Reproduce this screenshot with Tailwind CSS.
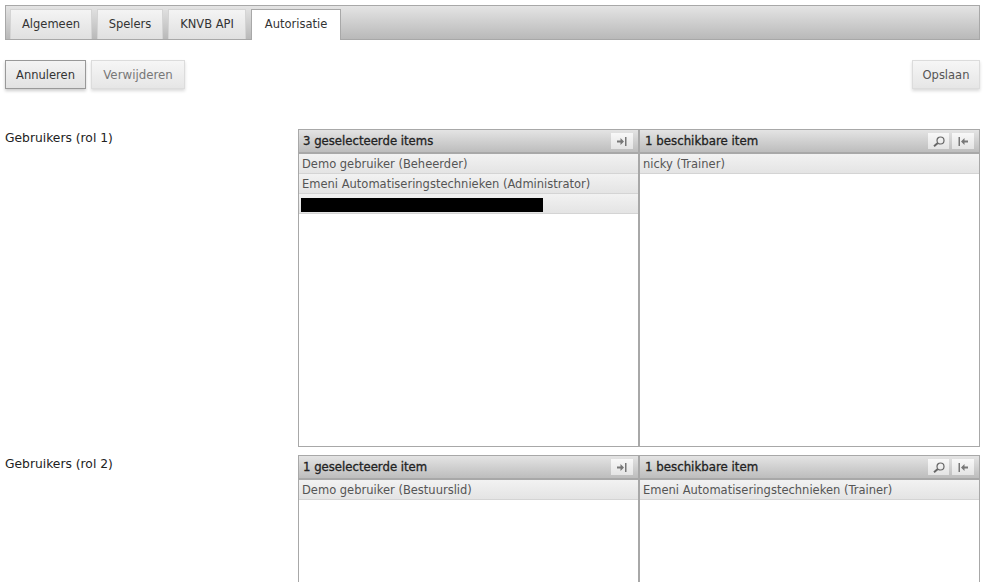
<!DOCTYPE html>
<html lang="nl">
<head>
  <meta charset="UTF-8" />
  <title>Autorisatie</title>
  <script src="https://cdn.jsdelivr.net/npm/@tailwindcss/browser@4"></script>
</head>
<body class="bg-white h-[582px] overflow-hidden pl-[5px] pr-[9px] pt-[5px] font-['DejaVu_Sans',sans-serif] text-[11.5px] text-[#333]">
  <!-- tabs -->
  <div class="h-[35px] border border-[#a8a8a8] bg-gradient-to-b from-[#e4e4e4] to-[#b9b9b9] flex items-end gap-[5px] pl-[4px]">
    <div class="w-[82px] h-[30px] border border-[#d4d4d4] border-b-0 bg-gradient-to-b from-[#f4f4f4] to-[#e0e0e0] flex items-center justify-center">Algemeen</div>
    <div class="w-[66px] h-[30px] border border-[#d4d4d4] border-b-0 bg-gradient-to-b from-[#f4f4f4] to-[#e0e0e0] flex items-center justify-center">Spelers</div>
    <div class="w-[78px] h-[30px] border border-[#d4d4d4] border-b-0 bg-gradient-to-b from-[#f4f4f4] to-[#e0e0e0] flex items-center justify-center">KNVB API</div>
    <div class="w-[90px] h-[31px] -mb-px border border-[#a8a8a8] border-b-0 bg-white flex items-center justify-center">Autorisatie</div>
  </div>

  <!-- buttons -->
  <div class="mt-[20px] flex gap-[5px]">
    <button class="w-[81px] h-[29px] pt-[2px] border border-[#999] bg-gradient-to-b from-[#f4f4f4] to-[#e2e2e2] shadow-[0_2px_3px_rgba(0,0,0,0.2)]">Annuleren</button>
    <button class="w-[94px] h-[29px] pt-[2px] border border-[#dcdcdc] bg-gradient-to-b from-[#f6f6f6] to-[#e6e6e6] shadow-[0_2px_3px_rgba(0,0,0,0.15)] text-[#777] text-[11.8px]">Verwijderen</button>
    <button class="ml-auto w-[68px] h-[29px] pt-[2px] border border-[#dcdcdc] bg-gradient-to-b from-[#f6f6f6] to-[#e6e6e6] shadow-[0_2px_3px_rgba(0,0,0,0.15)] text-[#555]">Opslaan</button>
  </div>

  <!-- rol 1 -->
  <div class="mt-[40px] flex">
    <div class="w-[293px] pt-px leading-[17px] text-[12.3px] text-[#222]">Gebruikers (rol 1)</div>
    <div class="flex w-[682px] h-[318px] border border-[#a8a8a8]">
      <div class="flex-1 border-r-2 border-[#a8a8a8] flex flex-col">
        <div class="h-[24px] border-b-2 border-[#a8a8a8] bg-gradient-to-b from-[#e4e4e4] to-[#bdbdbd] flex items-center pl-[4px] pr-[5px] text-[11.7px] text-[#222] [-webkit-text-stroke:0.3px_#222]">
          <span class="flex-1 pt-px">3 geselecteerde items</span>
          <span class="w-[22px] h-[16px] bg-gradient-to-b from-[#f8f8f8] to-[#e4e4e4] flex items-center justify-center">
            <svg width="10" height="9" viewBox="0 0 10 9" fill="#777" stroke="none"><path d="M0 3.5h3.5V1l3.5 3.5L3.5 8V5.5H0zM8 0h1.5v9H8z"/></svg>
          </span>
        </div>
        <div class="h-[20px] pt-[2px] border-b border-[#d4d4d4] bg-gradient-to-b from-[#f2f2f2] to-[#e4e4e4] flex items-center pl-[3px] text-[#555]">Demo gebruiker (Beheerder)</div>
        <div class="h-[20px] pt-[2px] border-b border-[#d4d4d4] bg-gradient-to-b from-[#f2f2f2] to-[#e4e4e4] flex items-center pl-[3px] text-[#555]">Emeni Automatiseringstechnieken (Administrator)</div>
        <div class="h-[20px] pt-[2px] border-b border-[#d4d4d4] bg-gradient-to-b from-[#f2f2f2] to-[#e4e4e4] flex items-center pl-[2px]"><div class="w-[242px] h-[14px] bg-black"></div></div>
      </div>
      <div class="flex-1 flex flex-col">
        <div class="h-[24px] border-b-2 border-[#a8a8a8] bg-gradient-to-b from-[#e4e4e4] to-[#bdbdbd] flex items-center gap-[3px] pl-[5px] pr-[5px] text-[11.8px] text-[#222] [-webkit-text-stroke:0.3px_#222]">
          <span class="flex-1 pt-px">1 beschikbare item</span>
          <span class="w-[21px] h-[16px] bg-gradient-to-b from-[#f8f8f8] to-[#e4e4e4] flex items-center justify-center">
            <svg width="12" height="11" viewBox="0 0 12 11" fill="none" stroke="#666"><circle cx="7.5" cy="4.5" r="3.5" stroke-width="1.2"/><path d="M4.8 7L1 10.2" stroke-width="2"/></svg>
          </span>
          <span class="w-[22px] h-[16px] bg-gradient-to-b from-[#f8f8f8] to-[#e4e4e4] flex items-center justify-center">
            <svg width="10" height="9" viewBox="0 0 10 9" fill="#777" stroke="none"><path d="M0.5 0H2v9H0.5zM10 3.5H6.5V1L3 4.5 6.5 8V5.5H10z"/></svg>
          </span>
        </div>
        <div class="h-[20px] pt-[2px] border-b border-[#d4d4d4] bg-gradient-to-b from-[#f2f2f2] to-[#e4e4e4] flex items-center pl-[3px] text-[#555]">nicky (Trainer)</div>
      </div>
    </div>
  </div>

  <!-- rol 2 -->
  <div class="mt-[8px] flex">
    <div class="w-[293px] pt-px leading-[17px] text-[12.3px] text-[#222]">Gebruikers (rol 2)</div>
    <div class="flex w-[682px] h-[318px] border border-[#a8a8a8]">
      <div class="flex-1 border-r-2 border-[#a8a8a8] flex flex-col">
        <div class="h-[24px] border-b-2 border-[#a8a8a8] bg-gradient-to-b from-[#e4e4e4] to-[#bdbdbd] flex items-center pl-[4px] pr-[5px] text-[11.7px] text-[#222] [-webkit-text-stroke:0.3px_#222]">
          <span class="flex-1 pt-px">1 geselecteerde item</span>
          <span class="w-[22px] h-[16px] bg-gradient-to-b from-[#f8f8f8] to-[#e4e4e4] flex items-center justify-center">
            <svg width="10" height="9" viewBox="0 0 10 9" fill="#777" stroke="none"><path d="M0 3.5h3.5V1l3.5 3.5L3.5 8V5.5H0zM8 0h1.5v9H8z"/></svg>
          </span>
        </div>
        <div class="h-[20px] pt-[2px] border-b border-[#d4d4d4] bg-gradient-to-b from-[#f2f2f2] to-[#e4e4e4] flex items-center pl-[3px] text-[#555]">Demo gebruiker (Bestuurslid)</div>
      </div>
      <div class="flex-1 flex flex-col">
        <div class="h-[24px] border-b-2 border-[#a8a8a8] bg-gradient-to-b from-[#e4e4e4] to-[#bdbdbd] flex items-center gap-[3px] pl-[5px] pr-[5px] text-[11.8px] text-[#222] [-webkit-text-stroke:0.3px_#222]">
          <span class="flex-1 pt-px">1 beschikbare item</span>
          <span class="w-[21px] h-[16px] bg-gradient-to-b from-[#f8f8f8] to-[#e4e4e4] flex items-center justify-center">
            <svg width="12" height="11" viewBox="0 0 12 11" fill="none" stroke="#666"><circle cx="7.5" cy="4.5" r="3.5" stroke-width="1.2"/><path d="M4.8 7L1 10.2" stroke-width="2"/></svg>
          </span>
          <span class="w-[22px] h-[16px] bg-gradient-to-b from-[#f8f8f8] to-[#e4e4e4] flex items-center justify-center">
            <svg width="10" height="9" viewBox="0 0 10 9" fill="#777" stroke="none"><path d="M0.5 0H2v9H0.5zM10 3.5H6.5V1L3 4.5 6.5 8V5.5H10z"/></svg>
          </span>
        </div>
        <div class="h-[20px] pt-[2px] border-b border-[#d4d4d4] bg-gradient-to-b from-[#f2f2f2] to-[#e4e4e4] flex items-center pl-[3px] text-[#555]">Emeni Automatiseringstechnieken (Trainer)</div>
      </div>
    </div>
  </div>
</body>
</html>
